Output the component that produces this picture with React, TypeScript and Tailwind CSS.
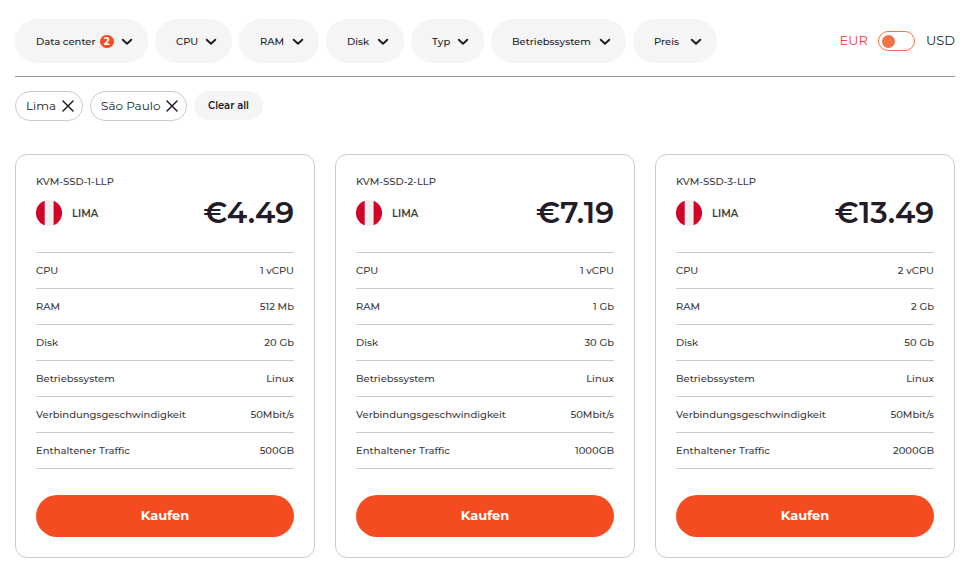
import { useState } from "react";

const filters = [
  { label: "Data center", count: 2, width: "w-[133px]" },
  { label: "CPU", width: "w-[77px]" },
  { label: "RAM", width: "w-[80px]" },
  { label: "Disk", width: "w-[78px]" },
  { label: "Typ", width: "w-[73px]" },
  { label: "Betriebssystem", width: "w-[135px]" },
  { label: "Preis", width: "w-[84px]" },
];

const chips = [
  { label: "Lima", width: "w-[68px]" },
  { label: "São Paulo", width: "w-[97px]" },
];

const plans = [
  {
    name: "KVM-SSD-1-LLP",
    price: "€4.49",
    specs: [
      ["CPU", "1 vCPU"],
      ["RAM", "512 Mb"],
      ["Disk", "20 Gb"],
      ["Betriebssystem", "Linux"],
      ["Verbindungsgeschwindigkeit", "50Mbit/s"],
      ["Enthaltener Traffic", "500GB"],
    ],
  },
  {
    name: "KVM-SSD-2-LLP",
    price: "€7.19",
    specs: [
      ["CPU", "1 vCPU"],
      ["RAM", "1 Gb"],
      ["Disk", "30 Gb"],
      ["Betriebssystem", "Linux"],
      ["Verbindungsgeschwindigkeit", "50Mbit/s"],
      ["Enthaltener Traffic", "1000GB"],
    ],
  },
  {
    name: "KVM-SSD-3-LLP",
    price: "€13.49",
    specs: [
      ["CPU", "2 vCPU"],
      ["RAM", "2 Gb"],
      ["Disk", "50 Gb"],
      ["Betriebssystem", "Linux"],
      ["Verbindungsgeschwindigkeit", "50Mbit/s"],
      ["Enthaltener Traffic", "2000GB"],
    ],
  },
];

function Chevron() {
  return (
    <svg width="12" height="8" viewBox="0 0 12 8" fill="none" aria-hidden="true">
      <path
        d="M1.7 2.7L6 6.7L10.3 2.7"
        stroke="#211c28"
        strokeWidth="1.9"
        strokeLinecap="round"
        strokeLinejoin="round"
      />
    </svg>
  );
}

function PeruFlag() {
  return (
    <svg width="26" height="26" viewBox="0 0 26 26" aria-hidden="true">
      <clipPath id="flag-circle">
        <circle cx="13" cy="13" r="13" />
      </clipPath>
      <g clipPath="url(#flag-circle)">
        <rect width="26" height="26" fill="#f0f0f0" />
        <rect width="8.7" height="26" fill="#d0012b" />
        <rect x="17.6" width="9" height="26" fill="#d0012b" />
      </g>
    </svg>
  );
}

function PlanCard({ plan }: { plan: (typeof plans)[number] }) {
  return (
    <article className="rounded-xl border border-[#cccccc] p-5">
      <h2 className="mb-3 text-[10px] leading-[13px] font-medium text-[#3d3b40]">
        {plan.name}
      </h2>
      <div className="mb-[26px] flex h-[26px] items-center">
        <PeruFlag />
        <span className="ml-2.5 text-[10px] font-semibold text-[#3d3b40]">
          LIMA
        </span>
        <span className="ml-auto text-3xl font-semibold text-[#211c28]">
          {plan.price}
        </span>
      </div>
      <table className="w-full border-collapse text-[10px] leading-[15px] font-medium text-[#3d3b40]">
        <tbody>
          {plan.specs.map(([label, value]) => (
            <tr key={label} className="h-9 border-y border-[#cccccc]">
              <th scope="row" className="p-0 text-left font-medium">
                {label}
              </th>
              <td className="p-0 text-right">{value}</td>
            </tr>
          ))}
        </tbody>
      </table>
      <button
        type="button"
        className="mt-[26px] h-[42px] w-full rounded-full bg-[#f54b20] text-[13px] font-bold text-white"
      >
        Kaufen
      </button>
    </article>
  );
}

export default function App() {
  const [usd, setUsd] = useState(false);

  return (
    <main className="min-h-screen bg-white pt-[19px] pr-[18px] pb-3.5 pl-[15px] font-['Montserrat','Inter',sans-serif] text-[#211c28]">
      <div className="flex items-center justify-between border-b border-[#999999] pb-[13px]">
        <div className="flex flex-wrap gap-[7px]">
          {filters.map((filter) => (
            <button
              key={filter.label}
              type="button"
              aria-haspopup="listbox"
              className={`flex h-11 items-center justify-between rounded-full bg-[#f5f5f5] pr-[15px] pl-[21px] text-[10px] font-medium ${filter.width}`}
            >
              <span className="flex items-center gap-1">
                {filter.label}
                {filter.count && (
                  <span className="flex h-[13px] w-3.5 items-center justify-center rounded-full bg-[#f54b20] text-[10px] leading-[13px] font-bold text-white">
                    {filter.count}
                  </span>
                )}
              </span>
              <Chevron />
            </button>
          ))}
        </div>
        <label className="flex items-center text-[13px]">
          <span className="text-[#ee3e43]">EUR</span>
          <input
            type="checkbox"
            role="switch"
            aria-label="USD"
            checked={usd}
            onChange={(e) => setUsd(e.target.checked)}
            className="mr-[11px] ml-2.5 flex h-5 w-[37px] appearance-none items-center rounded-full border border-[#f07345] px-[3px] before:size-[13px] before:rounded-full before:bg-[#f07345] checked:justify-end"
          />
          <span>USD</span>
        </label>
      </div>

      <div className="mt-3.5 flex gap-[7px]">
        {chips.map((chip) => (
          <button
            key={chip.label}
            type="button"
            className={`flex h-[30px] items-center justify-between rounded-full border border-[#cccccc] pr-2 pl-2.5 text-xs ${chip.width}`}
          >
            {chip.label}
            <svg width="12" height="12" viewBox="0 0 12 12" aria-hidden="true">
              <path
                d="M1 1L11 11M11 1L1 11"
                stroke="#211c28"
                strokeWidth="1.5"
                strokeLinecap="round"
              />
            </svg>
          </button>
        ))}
        <button
          type="button"
          className="h-[29px] w-[69px] rounded-full bg-[#f5f5f5] text-[10px] font-semibold"
        >
          Clear all
        </button>
      </div>

      <div className="mt-[33px] grid grid-cols-3 gap-5">
        {plans.map((plan) => (
          <PlanCard key={plan.name} plan={plan} />
        ))}
      </div>
    </main>
  );
}
